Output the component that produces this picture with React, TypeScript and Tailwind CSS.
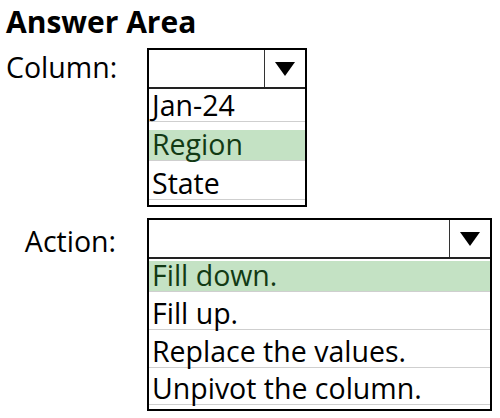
import React from "react";

type Item = { label: string; selected?: boolean };

function Arrow() {
  return (
    <svg width="20" height="14" viewBox="0 0 20 14">
      <polygon points="0,0 20,0 10,14" fill="#000" />
    </svg>
  );
}

function Dropdown({
  width,
  items,
  rowHeights,
}: {
  width: string;
  items: Item[];
  rowHeights: number[];
}) {
  return (
    <div className={`${width} border-2 border-black bg-white`}>
      <div className="flex h-[39px] border-b-2 border-[#222]">
        <div className="flex-1" />
        <div className="flex w-[41px] items-center justify-center border-l border-[#333]">
          <Arrow />
        </div>
      </div>
      <div className="flex flex-col">
        {items.map((item, i) => (
          <div
            key={item.label}
            className="flex flex-col justify-center pb-[4px]"
            style={{ height: rowHeights[i] }}
          >
            <div
              className={`flex h-[31px] items-center border-b border-[#cfcfcf] px-[3px] leading-none ${
                item.selected ? "bg-[#c4e2c4] text-[#123a14]" : "text-black"
              }`}
            >
              {item.label}
            </div>
          </div>
        ))}
      </div>
    </div>
  );
}

export default function App() {
  return (
    <div
      className="h-[418px] w-[500px] bg-white px-[6px] pt-[3px] text-black"
      style={{ fontFamily: '"Open Sans", "Noto Sans", sans-serif' }}
    >
      <h1 className="text-[30px] font-bold leading-[38px]">Answer Area</h1>

      <div className="mt-[7px] flex items-start">
        <div className="w-[110px] pt-[2px] text-right text-[28.5px] leading-[34px]">Column:</div>
        <div className="ml-[31px] text-[28.5px]">
          <Dropdown
            width="w-[160px]"
            items={[{ label: "Jan-24" }, { label: "Region", selected: true }, { label: "State" }]}
            rowHeights={[38, 40, 38]}
          />
        </div>
      </div>

      <div className="mt-[11px] flex items-start">
        <div className="w-[110px] pt-[6px] text-right text-[28.5px] leading-[34px]">Action:</div>
        <div className="ml-[31px] text-[28.5px]">
          <Dropdown
            width="w-[345px]"
            items={[
              { label: "Fill down.", selected: true },
              { label: "Fill up." },
              { label: "Replace the values." },
              { label: "Unpivot the column." },
            ]}
            rowHeights={[38, 38, 38, 36]}
          />
        </div>
      </div>
    </div>
  );
}
